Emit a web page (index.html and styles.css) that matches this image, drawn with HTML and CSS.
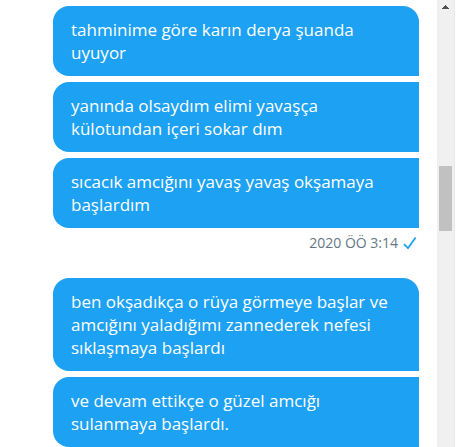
FILE: index.html
```html
<!DOCTYPE html>
<html lang="tr">
<head>
<meta charset="UTF-8">
<meta name="viewport" content="width=device-width, initial-scale=1.0">
<title>Mesajlar</title>
<link rel="stylesheet" href="styles.css">
</head>
<body>

<div class="chat">
    <main class="messages">
        <div class="group">
            <p class="bubble first">tahminime göre karın derya şuanda uyuyor</p>
            <p class="bubble">yanında olsaydım elimi yavaşça külotundan içeri sokar dım</p>
            <p class="bubble">sıcacık amcığını yavaş yavaş okşamaya başlardım</p>
            <div class="time">
                <span>2020 ÖÖ 3:14</span>
                <svg class="check" viewBox="0 0 14 14" aria-hidden="true">
                    <path d="M1 8.2L5 12.2L12.6 1.4"/>
                </svg>
            </div>
        </div>
        <div class="group">
            <p class="bubble first">ben okşadıkça o rüya görmeye başlar ve amcığını yaladığımı zannederek nefesi sıklaşmaya başlardı</p>
            <p class="bubble">ve devam ettikçe o güzel amcığı sulanmaya başlardı.</p>
        </div>
    </main>
    <div class="scrollbar">
        <svg class="arrow" viewBox="0 0 7 4" aria-hidden="true">
            <path d="M0 4V3H1V2H2V1H3V0H4V1H5V2H6V3H7V4Z"/>
        </svg>
        <div class="thumb"></div>
    </div>
</div>

</body>
</html>
```

FILE: styles.css
```css
body {
    margin: 0;
    background-color: #fff;
    font-family: "Segoe UI", "Open Sans", "Noto Sans", sans-serif;
}
.chat {
    display: flex;
    min-height: 100vh;
    padding-right: 6px;
}
.messages {
    flex: 1;
    padding: 6px 18px 0 53px;
}
.group {
    display: flex;
    flex-direction: column;
    gap: 6px;
}
.bubble {
    margin: 0;
    padding: 12px 18px;
    background-color: #1da1f2;
    border-radius: 16px 0 0 16px;
    color: #fff;
    font-size: 17px;
    line-height: 23px;
}
.first {
    border-top-right-radius: 16px;
}
.time {
    display: flex;
    justify-content: flex-end;
    align-items: center;
    gap: 5px;
    height: 18px;
    margin-bottom: 26px;
    padding-right: 2px;
    color: #657786;
    font-size: 14px;
    line-height: 18px;
}
.check {
    width: 14px;
    height: 14px;
    fill: none;
    stroke: #1da1f2;
    stroke-width: 1.8;
}
.scrollbar {
    box-sizing: border-box;
    width: 18px;
    padding: 5px 2px 0;
    border-right: 1px solid #e8e8e8;
    background-color: #f0f0f0;
}
.arrow {
    display: block;
    width: 7px;
    height: 4px;
    margin: 0 3px;
    fill: #505050;
}
.thumb {
    height: 65px;
    margin-top: 157px;
    background-color: #c1c1c1;
}
```
